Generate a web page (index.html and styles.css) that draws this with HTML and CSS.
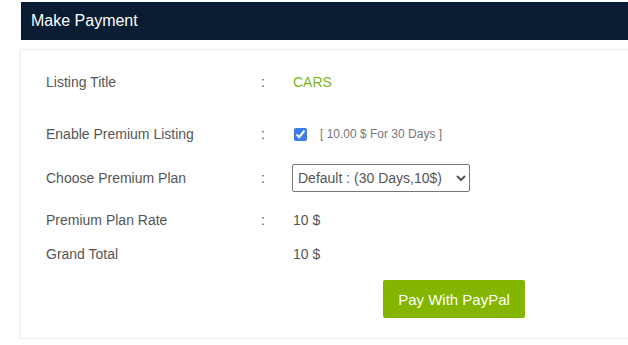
FILE: index.html
```
<!DOCTYPE html>
<html>
<head>
    <meta charset="utf-8" />
    <title>Make Payment</title>
    <link rel="stylesheet" href="styles.css">
</head>
<body>
    <div class="panel">
        <div class="panelHead">Make Payment</div>

        <div class="panelBody">
            <div class="row rowFirst">
                <div class="label">Listing Title</div>
                <div class="colon">:</div>
                <div class="value title">CARS</div>
            </div>

            <div class="row rowCheck">
                <div class="label">Enable Premium Listing</div>
                <div class="colon">:</div>
                <div class="value">
                    <input type="checkbox" id="premium" checked>
                    <span class="note">[ 10.00 $ For 30 Days ]</span>
                </div>
            </div>

            <div class="row rowPlan">
                <div class="label">Choose Premium Plan</div>
                <div class="colon">:</div>
                <div class="value">
                    <select id="plan" name="plan">
                        <option>Default : (30 Days,10$)</option>
                    </select>
                </div>
            </div>

            <div class="row rowRate">
                <div class="label">Premium Plan Rate</div>
                <div class="colon">:</div>
                <div class="value">10 $</div>
            </div>

            <div class="row rowTotal">
                <div class="label">Grand Total</div>
                <div class="colon"></div>
                <div class="value">10 $</div>
            </div>

            <div class="actions">
                <button class="buttonGreen">Pay With PayPal</button>
            </div>
        </div>
    </div>
</body>
</html>
```

FILE: styles.css
```
body {
    margin: 0;
    background: #fff;
    font-family: "Liberation Sans", Arial, sans-serif;
    overflow: hidden;
}

.panel {
    margin: 2px 0 0 21px;
}

.panelHead {
    height: 38px;
    line-height: 38px;
    background: #0a1d32;
    color: #fff;
    font-size: 16px;
    padding-left: 10px;
}

.panelBody {
    margin-top: 9px;
    margin-left: -1px;
    padding: 18px 0 20px 25px;
    border: 1px solid #ededed;
    border-right: none;
    box-shadow: 0 1px 4px rgba(0, 0, 0, 0.06);
    background: #fff;
}

.row {
    display: flex;
    align-items: center;
    height: 28px;
    font-size: 14px;
    color: #555;
}

.label {
    width: 215px;
}

.colon {
    width: 32px;
}

.value {
    display: flex;
    align-items: center;
}

.title {
    color: #7cb518;
}

.rowCheck {
    margin-top: 24px;
}

.rowPlan {
    margin-top: 16px;
}

.rowRate {
    margin-top: 14px;
}

.rowTotal {
    margin-top: 6px;
}

input[type=checkbox] {
    width: 13px;
    height: 13px;
    margin: 0 13px 0 1px;
    accent-color: #3e7be6;
}

.note {
    font-size: 12px;
    color: #777;
}

select {
    width: 178px;
    height: 28px;
    margin-left: -1px;
    font-family: "Liberation Sans", Arial, sans-serif;
    font-size: 14px;
    color: #555;
    border: 1px solid #767676;
    border-radius: 2px;
    background: #fff;
    padding: 0 1px;
}

.actions {
    margin-top: 12px;
    padding-left: 337px;
}

.buttonGreen {
    width: 142px;
    height: 38px;
    border: none;
    border-radius: 2px;
    background: #84b600;
    color: #fff;
    font-family: "Liberation Sans", Arial, sans-serif;
    font-size: 15px;
}
```
